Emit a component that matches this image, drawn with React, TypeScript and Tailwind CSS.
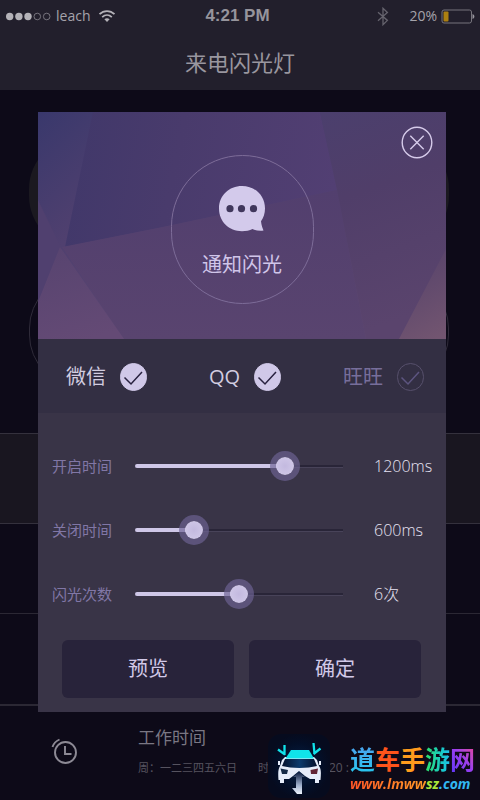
import { useState } from "react"

const apps = [
  { name: "微信", on: true },
  { name: "QQ", on: true },
  { name: "旺旺", on: false },
]

function StatusBar() {
  return (
    <div className="flex h-8 items-center justify-between pl-[6px] pr-[5px] font-['Open_Sans',sans-serif] text-[#a5a3ab]">
      <div className="flex flex-1 items-center">
        <svg width="45" height="9" viewBox="0 0 45 9" aria-hidden="true">
          <circle cx="3.7" cy="4.5" r="3.7" fill="#b4b2b8" />
          <circle cx="12.9" cy="4.5" r="3.7" fill="#b4b2b8" />
          <circle cx="22" cy="4.5" r="3.7" fill="#b4b2b8" />
          <circle cx="31.3" cy="4.5" r="3.3" fill="none" stroke="#8a8890" strokeWidth=".8" />
          <circle cx="40.7" cy="4.5" r="3.3" fill="none" stroke="#8a8890" strokeWidth=".8" />
        </svg>
        <span className="ml-[5px] text-sm">leach</span>
        <svg className="ml-2" width="18" height="14" viewBox="0 0 18 14" fill="none" aria-hidden="true">
          <path d="M1.5 5.2C5.8 1 12.2 1 16.5 5.2" stroke="#b4b2b8" strokeWidth="1.8" />
          <path d="M4.2 8.1C7 5.4 11 5.4 13.8 8.1" stroke="#b4b2b8" strokeWidth="1.8" />
          <path d="M9 13L6.4 10.3C7.8 9 10.2 9 11.6 10.3Z" fill="#b4b2b8" />
        </svg>
      </div>
      <span className="mr-[6px] font-['Liberation_Sans',sans-serif] text-[17px] font-bold text-[#96949c]">4:21 PM</span>
      <div className="flex flex-1 items-center justify-end">
        <svg width="12" height="19" viewBox="0 0 12 19" fill="none" stroke="#65636d" strokeWidth="1.3" aria-hidden="true">
          <path d="M1 5.2L10.4 13.4L6 17.7V1.3L10.4 5.5L1 13.8" />
        </svg>
        <span className="ml-5 text-sm">20%</span>
        <svg className="ml-1" width="34" height="15" viewBox="0 0 34 15" aria-hidden="true">
          <rect x="1" y="1" width="29.5" height="13" rx="2" fill="none" stroke="#77757d" />
          <rect x="2.5" y="2.5" width="5" height="10" rx="1" fill="#ad8011" />
          <path d="M31.5 5C34 6 34 9 31.5 10Z" fill="#98969e" />
        </svg>
      </div>
    </div>
  )
}

function BannerArt() {
  return (
    <svg
      className="col-start-1 row-start-1 h-full w-full"
      viewBox="0 0 408 227"
      preserveAspectRatio="none"
      aria-hidden="true"
    >
      <defs>
        <linearGradient id="base" x1="0" y1="0" x2="0.5" y2="1">
          <stop offset="0" stopColor="#3f396d" />
          <stop offset=".5" stopColor="#50406f" />
          <stop offset="1" stopColor="#5e4872" />
        </linearGradient>
        <linearGradient id="topFacet" x1="0" y1=".4" x2="1" y2="0.5">
          <stop offset="0" stopColor="#41386a" />
          <stop offset=".4" stopColor="#493b6c" />
          <stop offset="1" stopColor="#523f73" />
        </linearGradient>
        <linearGradient id="leftFacet" x1="0" y1="0" x2=".4" y2="1">
          <stop offset="0" stopColor="#39386c" />
          <stop offset="1" stopColor="#50406f" />
        </linearGradient>
        <linearGradient id="lowFacet" x1="0" y1="0" x2="0" y2="1">
          <stop offset="0" stopColor="#523f6e" />
          <stop offset="1" stopColor="#59446f" />
        </linearGradient>
        <linearGradient id="pinkFacet" x1=".3" y1="0" x2=".6" y2="1">
          <stop offset="0" stopColor="#584470" />
          <stop offset="1" stopColor="#644a75" />
        </linearGradient>
        <linearGradient id="rightFacet" x1="0" y1="0" x2=".2" y2="1">
          <stop offset="0" stopColor="#4b3f6d" />
          <stop offset=".4" stopColor="#503e69" />
          <stop offset="1" stopColor="#5a446d" />
        </linearGradient>
        <linearGradient id="cornerFacet" x1=".5" y1="0" x2=".8" y2="1">
          <stop offset="0" stopColor="#57436b" />
          <stop offset="1" stopColor="#725570" />
        </linearGradient>
      </defs>
      <rect width="408" height="227" fill="url(#base)" />
      <path d="M0 0H55L27 135H22L0 88Z" fill="url(#leftFacet)" />
      <path d="M0 88L23 135L0 190Z" fill="#50406f" />
      <path d="M55 0H282L299 78L125 115L27 135Z" fill="url(#topFacet)" />
      <path d="M24 135L125 115L299 78L328 227H86Z" fill="url(#lowFacet)" />
      <path d="M22 135L86 227H0V190Z" fill="url(#pinkFacet)" />
      <path d="M282 0H408V227H328L299 78Z" fill="url(#rightFacet)" />
      <path d="M408 137V227H361Z" fill="url(#cornerFacet)" />
    </svg>
  )
}

function Banner() {
  return (
    <div className="grid h-[227px]">
      <BannerArt />
      <div className="col-start-1 row-start-1 grid grid-cols-[1fr_auto_1fr]">
        <div className="col-start-2 mt-[43px] flex h-[149px] w-[143px] flex-col items-center rounded-full border border-[#7d6c98]">
          <svg className="mt-[30px]" width="48" height="47" viewBox="0 0 48 47" aria-hidden="true">
            <path
              d="M24 0C37 0 47 9.5 47 22.5C47 27.5 45.5 31.8 43 35.2C43.4 39 44.5 42 45.5 44.5C41.5 45 37.5 44.5 34.5 43C31.5 44.5 28 45.2 24 45.2C11 45.2 1 35.5 1 22.5C1 9.5 11 0 24 0Z"
              fill="#d3caeb"
            />
            <circle cx="12" cy="22.7" r="3.6" fill="#40375c" />
            <circle cx="23.5" cy="22.7" r="3.6" fill="#40375c" />
            <circle cx="35.5" cy="22.7" r="3.6" fill="#40375c" />
          </svg>
          <h2 className="mt-[18px] text-xl leading-7 text-[#d0c5e9]">通知闪光</h2>
        </div>
        <button type="button" aria-label="关闭" className="mt-[14px] mr-[13px] self-start justify-self-end">
          <svg width="32" height="33" viewBox="0 0 32 33" fill="none" stroke="#d6cbea" strokeWidth="1.4">
            <ellipse cx="16" cy="16.5" rx="14.8" ry="15.3" />
            <path d="M9.3 9.7L22.7 23.2M22.7 9.7L9.3 23.2" />
          </svg>
        </button>
      </div>
    </div>
  )
}

function AppToggle({ name, on }: { name: string; on: boolean }) {
  const [checked, setChecked] = useState(on)

  return (
    <label className={`flex items-center gap-[14px] text-xl ${checked ? "text-[#d2cde0]" : "text-[#776e9b]"}`}>
      {name}
      <span className="grid">
        <input
          type="checkbox"
          checked={checked}
          onChange={(e) => setChecked(e.target.checked)}
          className="col-start-1 row-start-1 h-7 w-[27px] appearance-none rounded-full border border-[#57506c] checked:border-[#d0c8e8] checked:bg-[#d0c8e8]"
        />
        <svg
          className="pointer-events-none col-start-1 row-start-1"
          width="27"
          height="28"
          viewBox="0 0 27 28"
          fill="none"
          stroke={checked ? "#28213f" : "#5d5580"}
          strokeWidth="1.5"
          aria-hidden="true"
        >
          <path d="M4.5 14.5L11 21L22 9" />
        </svg>
      </span>
    </label>
  )
}

interface SliderRowProps {
  id: string
  label: string
  unit: string
  min: number
  max: number
  step: number
  initial: number
}

function SliderRow({ id, label, unit, min, max, step, initial }: SliderRowProps) {
  const [value, setValue] = useState(initial)
  const percent = ((value - min) / (max - min)) * 100

  return (
    <div className="flex h-16 items-center">
      <label htmlFor={id} className="w-[83px] shrink-0 text-[15px] text-[#8177a6]">
        {label}
      </label>
      <div className="grid flex-1 items-center">
        <span className="col-start-1 row-start-1 h-[3px] border-b border-[#484359] bg-[#292538]" />
        <span
          className="col-start-1 row-start-1 h-1 rounded-full bg-[#cfc7e8]"
          style={{ width: `${percent}%` }}
        />
        <input
          id={id}
          type="range"
          min={min}
          max={max}
          step={step}
          value={value}
          onChange={(e) => setValue(Number(e.target.value))}
          className="col-start-1 row-start-1 h-8 w-full appearance-none bg-transparent [&::-webkit-slider-thumb]:h-[18px] [&::-webkit-slider-thumb]:w-[18px] [&::-webkit-slider-thumb]:appearance-none [&::-webkit-slider-thumb]:rounded-full [&::-webkit-slider-thumb]:bg-[radial-gradient(circle,#c3b9df,#d3cbea)] [&::-webkit-slider-thumb]:shadow-[0_0_0_6px_#6d6394aa]"
        />
      </div>
      <output htmlFor={id} className="ml-[31px] w-[72px] shrink-0 text-base font-light text-[#e6e2f2]">
        {value}
        {unit}
      </output>
    </div>
  )
}

function FlashDialog() {
  return (
    <div role="dialog" aria-label="通知闪光" className="bg-[#393447]">
      <Banner />
      <div className="flex h-[74px] items-center justify-between bg-[#332f43] pt-[2px] pr-[22px] pl-7">
        {apps.map((app) => (
          <AppToggle key={app.name} name={app.name} on={app.on} />
        ))}
      </div>
      <div className="pt-[21px] pb-px pl-[14px]">
        <SliderRow id="on-time" label="开启时间" unit="ms" min={270} max={1520} step={10} initial={1200} />
        <SliderRow id="off-time" label="关闭时间" unit="ms" min={270} max={1520} step={10} initial={600} />
        <SliderRow id="count" label="闪光次数" unit="次" min={1} max={11} step={1} initial={6} />
      </div>
      <div className="flex gap-[15px] pt-[13px] pr-[25px] pb-[14px] pl-6 text-xl text-[#d2c9e8]">
        <button type="button" className="h-[58px] flex-1 rounded-md bg-[#28233a]">
          预览
        </button>
        <button type="button" className="h-[58px] flex-1 rounded-md bg-[#28233a]">
          确定
        </button>
      </div>
    </div>
  )
}

function CarLogo() {
  return (
    <svg width="62" height="64" viewBox="0 0 62 64" aria-hidden="true">
      <defs>
        <radialGradient id="logoBg">
          <stop offset="0" stopColor="#06234a" />
          <stop offset=".7" stopColor="#030f28" />
          <stop offset="1" stopColor="#060b1e" />
        </radialGradient>
        <linearGradient id="road" x1="0" y1="0" x2="0" y2="1">
          <stop offset="0" stopColor="#0b1c40" />
          <stop offset=".6" stopColor="#9fb0cc" />
          <stop offset="1" stopColor="#eef4fd" />
        </linearGradient>
        <linearGradient id="glass" x1="0" y1="0" x2="1" y2="0">
          <stop offset="0" stopColor="#04112c" />
          <stop offset=".5" stopColor="#0b3a6c" />
          <stop offset="1" stopColor="#04112c" />
        </linearGradient>
      </defs>
      <rect width="62" height="64" rx="13" fill="url(#logoBg)" />
      <path
        d="M14 26L17 23H46L49 26L51 32C53.500 35 53 40 52.500 46H51V49H47V45H42L37 42L31 37L25 42L21 45H16V49H12V46H10.500C10 40 10 35 12 32Z"
        fill="#e6edfa"
      />
      <path d="M23 16H41L46 24.500H17.500Z" fill="#10e3ea" />
      <path d="M17 25H46L49 32C39 34.500 24 34.500 14 32Z" fill="url(#glass)" />
      <path d="M10 27H12V31H10ZM51 27H53V31H51Z" fill="#e6edfa" />
      <path d="M12.500 34.500L20 36L19 40H14Z" fill="#152a47" />
      <path d="M50 34.500L42.500 36L43 40H49Z" fill="#622536" />
      <path d="M31 38L37 43H34V60H29L24 54H28V43H25Z" fill="url(#road)" />
      <path
        d="M16.500 11V21M10 15.500L17 20.500M45.500 9L46.500 20M52.500 14.500L45.500 20"
        stroke="#10e3ea"
        strokeWidth="2.300"
        fill="none"
      />
    </svg>
  )
}

function SiteBadge() {
  return (
    <div className="absolute right-[5px] bottom-[2px] flex items-end gap-5">
      <CarLogo />
      <div className="pb-1 font-bold whitespace-nowrap">
        <div className="flex text-[25px] leading-[30px]">
          <span className="bg-linear-to-b from-[#4aa0ee] to-[#22c7ee] bg-clip-text text-transparent">道</span>
          <span className="text-[#ff541b]">车</span>
          <span className="text-[#ff9b1d]">手</span>
          <span className="bg-linear-to-r from-[#32df5d] to-[#20bdf0] bg-clip-text text-transparent">游</span>
          <span className="bg-linear-to-tr from-[#5a35fa] via-[#9a3df0] to-[#f0378d] bg-clip-text text-transparent">网</span>
        </div>
        <a href="#" className="flex font-['Open_Sans',sans-serif] text-sm leading-5 italic">
          <span className="bg-linear-to-r from-[#ff5427] to-[#ff9827] bg-clip-text text-transparent">www.lmww</span>
          <span className="text-[#a9e53a]">sz</span>
          <span className="text-[#32b7f0]">.com</span>
        </a>
      </div>
    </div>
  )
}

export default function App() {
  return (
    <div className="relative min-h-screen overflow-hidden bg-[#0d0a18] font-['Open_Sans','Noto_Sans_CJK_SC',sans-serif]">
      <header className="h-[90px] bg-[#221f2c]">
        <StatusBar />
        <h1 className="pt-[14px] text-center text-[22px] leading-8 text-[#99969f]">来电闪光灯</h1>
      </header>

      <main>
        <div className="flex h-[343px] flex-col gap-7 pt-[47px] pr-[31px] pl-[29px]">
          <div className="flex justify-between">
            <span className="h-[111px] w-[104px] rounded-full bg-[#1b1920]" />
            <span className="h-[111px] w-[104px] rounded-full bg-[#1b1920]" />
          </div>
          <div className="flex justify-between">
            <span className="h-[111px] w-[104px] rounded-full border border-[#2f2b39]" />
            <span className="h-[111px] w-[104px] rounded-full border border-[#2f2b39]" />
          </div>
        </div>
        <div className="h-[91px] border-y border-[#34313d] bg-[#191620]" />
        <div className="h-[89px]" />
        <div className="h-[91px] border-t border-[#2b2834]" />
        <div className="flex h-[92px] items-center border-t-2 border-[#2b2834] pl-[51px]">
          <svg width="27" height="27" viewBox="0 0 27 27" fill="none" stroke="#8d8a95" strokeWidth="1.9" aria-hidden="true">
            <circle cx="14.500" cy="14.500" r="10.500" />
            <path d="M14 8V16H20.500" />
            <path d="M1.500 9C2.500 5.800 5 3 8.500 1.500" />
          </svg>
          <div className="ml-[60px]">
            <h3 className="text-[17px] leading-7 text-[#7a7783]">工作时间</h3>
            <p className="flex pt-[6px] text-[11px] leading-5 whitespace-nowrap text-[#56535f]">
              <span className="w-[120px]">周：一二三四五六日</span>
              <span className="w-[71px]">时</span>
              <span className="text-xs leading-5">20 :</span>
            </p>
          </div>
        </div>
      </main>

      <div className="absolute inset-x-0 top-0 pt-[112px] pr-[34px] pl-[38px]">
        <FlashDialog />
      </div>
      <SiteBadge />
    </div>
  )
}
